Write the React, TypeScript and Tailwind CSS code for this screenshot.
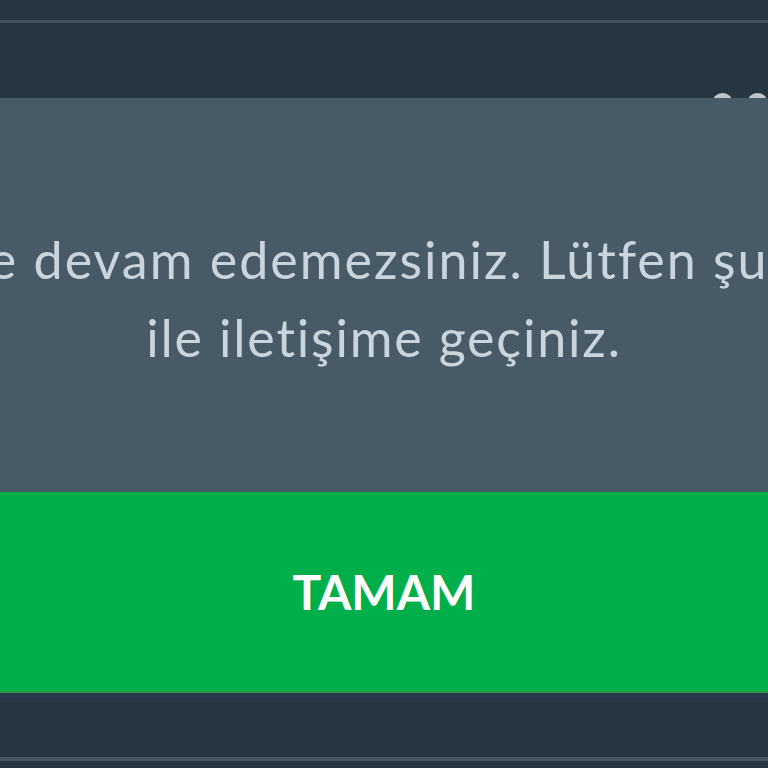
export default function App() {
  return (
    <div className="w-[768px] h-[768px] overflow-hidden bg-[#263640] flex flex-col" style={{ fontFamily: 'Lato, "Open Sans", sans-serif' }}>
      <div className="h-[98px] shrink-0 relative">
        <div className="mt-[20px] h-[3px] bg-[#44535d]" />
        <div className="absolute right-[0px] top-[93px] flex gap-[14px]">
          <span className="w-[21px] h-[21px] rounded-full bg-[#bcc7ce]" />
          <span className="w-[21px] h-[21px] rounded-full bg-[#bcc7ce]" />
        </div>
      </div>
      <div className="relative z-10 h-[394px] shrink-0 bg-[#475a66] flex flex-col pt-[122px] overflow-hidden">
        <p className="whitespace-nowrap text-[52px] leading-[78px] tracking-[2px] text-[#c8d5dd] ml-[-40px]">
          ile devam edemezsiniz. Lütfen şube
        </p>
        <p className="whitespace-nowrap text-[52px] leading-[78px] tracking-[1.8px] text-[#c8d5dd] text-center">
          ile iletişime geçiniz.
        </p>
      </div>
      <div className="relative z-10 h-[201px] shrink-0 bg-[#00ae4a] border-b-[2px] border-[#2a9a4f] flex items-center justify-center">
        <span className="text-[48px] font-bold text-white">TAMAM</span>
      </div>
      <div className="h-[9px] bg-[#2b3848]" />
      <div className="h-[55px]" />
      <div className="h-[4px] bg-[#46545e]" />
    </div>
  )
}
